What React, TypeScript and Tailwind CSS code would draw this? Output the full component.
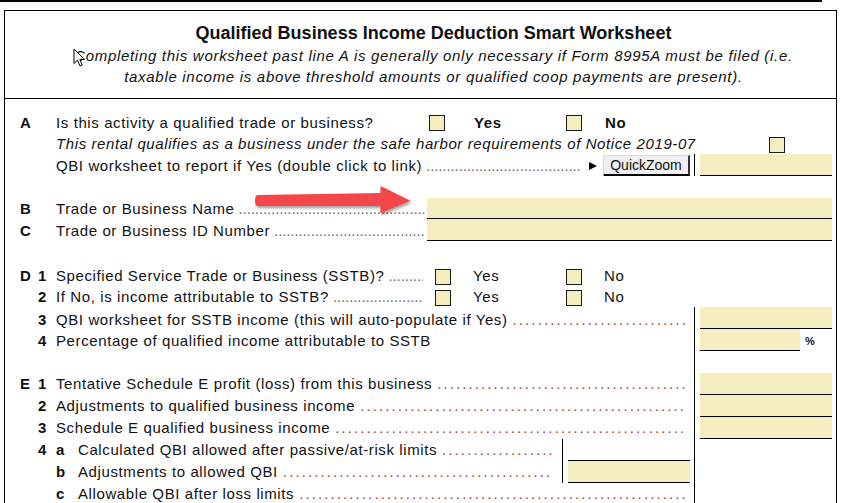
import React from "react";

const DOTS = ".".repeat(220);

function Check() {
  return <span className="block h-[16px] w-[16px] shrink-0 border border-[#1a1a1a] bg-[#f3edc0]" />;
}

function Lead({ red }: { red?: boolean }) {
  return (
    <span
      className={
        red
          ? "ml-[5px] w-0 min-w-0 flex-1 overflow-hidden whitespace-nowrap tracking-[2.1px] text-[#9a3a3a]"
          : "ml-[4px] w-0 min-w-0 flex-1 overflow-hidden whitespace-nowrap tracking-[-0.1px] text-[#6a6a6a]"
      }
    >
      {DOTS}
    </span>
  );
}

function L({ a, n }: { a?: string; n?: string }) {
  return (
    <>
      <span className="w-[18px] shrink-0 font-bold">{a}</span>
      <span className="w-[18px] shrink-0 font-bold">{n}</span>
    </>
  );
}

function Field() {
  return <div className="flex-1 border-b border-black bg-[#f3edc0]" />;
}

type RowProps = {
  h: string;
  line?: boolean;
  right?: React.ReactNode;
  children?: React.ReactNode;
  low?: boolean;
};

function Row({ h, line, right, children, low }: RowProps) {
  return (
    <div className={`flex ${h}`}>
      <div
        className={
          low
            ? "flex w-[689px] shrink-0 items-center overflow-hidden pl-[15px]"
            : "flex w-[689px] shrink-0 items-center overflow-hidden pl-[15px] pt-[2px]"
        }
      >
        {children}
      </div>
      <div className={line ? "w-px shrink-0 bg-black" : "w-px shrink-0"} />
      <div className="w-[5px] shrink-0" />
      <div className="flex w-[132px] shrink-0 flex-col">{right}</div>
      <div className="w-[4px] shrink-0" />
    </div>
  );
}

export default function App() {
  return (
    <div className="relative h-[503px] w-[858px] overflow-hidden bg-white font-['Liberation_Sans',Arial,sans-serif] text-[15px] tracking-[0.6px] text-[#111]">
      <div className="h-[2px] w-[822px] bg-black" />
      <div className="ml-[4px] mt-[8px] w-[833px] border border-b-0 border-black">
        {/* Title */}
        <div className="flex h-[88px] flex-col items-center border-b border-black pl-[26px] pt-[12px]">
          <div className="whitespace-nowrap text-[18px] font-bold leading-[21px] tracking-normal">
            Qualified Business Income Deduction Smart Worksheet
          </div>
          <div className="mt-[1px] whitespace-nowrap text-center text-[15px] italic leading-[21px] tracking-[0.7px]">
            Completing this worksheet past line A is generally only necessary if Form 8995A must be filed (i.e.
            <br />
            taxable income is above threshold amounts or qualified coop payments are present).
          </div>
        </div>

        <div className="h-[12px]" />

        {/* A */}
        <div className="flex h-[22px] items-center pl-[15px] pt-[2px]">
          <div className="flex w-[409px] shrink-0 items-center">
            <span className="w-[36px] shrink-0 font-bold">A</span>
            <span className="whitespace-nowrap">Is this activity a qualified trade or business?</span>
          </div>
          <Check />
          <span className="ml-[29px] w-[92px] shrink-0 font-bold">Yes</span>
          <Check />
          <span className="ml-[23px] font-bold">No</span>
        </div>
        <div className="flex h-[21px] items-center pl-[15px] pt-[2px]">
          <div className="flex w-[749px] shrink-0 items-center">
            <span className="w-[36px] shrink-0" />
            <span className="whitespace-nowrap italic">
              This rental qualifies as a business under the safe harbor requirements of Notice 2019-07
            </span>
          </div>
          <Check />
        </div>
        <Row h="h-[22px]" line right={<Field />}>
          <div className="flex min-w-0 flex-1 items-center pr-[4px]">
            <L />
            <span className="whitespace-nowrap">QBI worksheet to report if Yes (double click to link)</span>
            <Lead />
            <svg className="ml-[7px] shrink-0" width="8" height="8" viewBox="0 0 8 8">
              <polygon points="0,0 8,4 0,8" fill="#000" />
            </svg>
            <div className="ml-[6px] flex h-[22px] w-[87px] shrink-0 items-center justify-center border border-b-[3px] border-r-[2px] border-t-[#dcdcdc] border-l-[#dcdcdc] border-r-[#333] border-b-black bg-[#f0f0f0] text-[14px] tracking-normal">
              QuickZoom
            </div>
          </div>
        </Row>

        <div className="h-[22px]" />

        {/* B / C */}
        <div className="flex h-[21px]">
          <div className="flex w-[422px] shrink-0 items-center overflow-hidden pl-[15px] pr-[2px] pt-[2px]">
            <span className="w-[36px] shrink-0 font-bold">B</span>
            <span className="whitespace-nowrap">Trade or Business Name</span>
            <Lead />
          </div>
          <div className="w-[405px] shrink-0 border-b border-black bg-[#f3edc0]" />
        </div>
        <div className="flex h-[22px]">
          <div className="flex w-[422px] shrink-0 items-center overflow-hidden pl-[15px] pr-[2px] pt-[2px]">
            <span className="w-[36px] shrink-0 font-bold">C</span>
            <span className="whitespace-nowrap">Trade or Business ID Number</span>
            <Lead />
          </div>
          <div className="w-[405px] shrink-0 border-b border-black bg-[#f3edc0]" />
        </div>

        <div className="h-[24px]" />

        {/* D */}
        <Row h="h-[21px]">
          <div className="flex w-[415px] shrink-0 items-center overflow-hidden pr-[12px]">
            <L a="D" n="1" />
            <span className="whitespace-nowrap">Specified Service Trade or Business (SSTB)?</span>
            <Lead />
          </div>
          <Check />
          <span className="ml-[22px] w-[93px] shrink-0">Yes</span>
          <Check />
          <span className="ml-[22px]">No</span>
        </Row>
        <Row h="h-[21px]">
          <div className="flex w-[415px] shrink-0 items-center overflow-hidden pr-[12px]">
            <L n="2" />
            <span className="whitespace-nowrap">If No, is income attributable to SSTB?</span>
            <Lead />
          </div>
          <Check />
          <span className="ml-[22px] w-[93px] shrink-0">Yes</span>
          <Check />
          <span className="ml-[22px]">No</span>
        </Row>
        <Row h="h-[22px]" line right={<Field />}>
          <div className="flex min-w-0 flex-1 items-center pr-[8px] pt-[2px]">
            <L n="3" />
            <span className="whitespace-nowrap">QBI worksheet for SSTB income (this will auto-populate if Yes)</span>
            <Lead red />
          </div>
        </Row>
        <Row
          h="h-[22px]"
          line
          right={
            <div className="flex flex-1">
              <div className="w-[100px] border-b border-black bg-[#f3edc0]" />
              <span className="ml-[5px] mt-[4px] text-[11px] font-bold tracking-normal">%</span>
            </div>
          }
        >
          <div className="flex min-w-0 flex-1 items-center pr-[8px]">
            <L n="4" />
            <span className="whitespace-nowrap">Percentage of qualified income attributable to SSTB</span>
          </div>
        </Row>

        <Row h="h-[22px]" line />

        {/* E */}
        <Row h="h-[22px]" line low right={<Field />}>
          <div className="flex min-w-0 flex-1 items-center pr-[8px]">
            <L a="E" n="1" />
            <span className="whitespace-nowrap">Tentative Schedule E profit (loss) from this business</span>
            <Lead red />
          </div>
        </Row>
        <Row h="h-[22px]" line low right={<Field />}>
          <div className="flex min-w-0 flex-1 items-center pr-[8px]">
            <L n="2" />
            <span className="whitespace-nowrap">Adjustments to qualified business income</span>
            <Lead red />
          </div>
        </Row>
        <Row h="h-[22px]" line low right={<Field />}>
          <div className="flex min-w-0 flex-1 items-center pr-[8px]">
            <L n="3" />
            <span className="whitespace-nowrap">Schedule E qualified business income</span>
            <Lead red />
          </div>
        </Row>
        <Row h="h-[22px]" line low>
          <div className="flex h-full items-center">
            <div className="flex w-[533px] shrink-0 items-center overflow-hidden">
              <L n="4" />
              <span className="w-[22px] shrink-0 font-bold">a</span>
              <span className="whitespace-nowrap">Calculated QBI allowed after passive/at-risk limits</span>
              <Lead red />
            </div>
            <div className="w-[9px] shrink-0" />
            <div className="h-full w-px shrink-0 bg-black" />
            <div className="w-[5px] shrink-0" />
            <div className="flex h-full w-[122px] shrink-0 flex-col">
              <div className="flex-1 border-b border-black" />
            </div>
          </div>
        </Row>
        <Row h="h-[22px]" line low>
          <div className="flex h-full items-center">
            <div className="flex w-[533px] shrink-0 items-center overflow-hidden">
              <L />
              <span className="w-[22px] shrink-0 font-bold">b</span>
              <span className="whitespace-nowrap">Adjustments to allowed QBI</span>
              <Lead red />
            </div>
            <div className="w-[9px] shrink-0" />
            <div className="h-full w-px shrink-0 bg-black" />
            <div className="w-[5px] shrink-0" />
            <div className="flex h-full w-[122px] shrink-0 flex-col">
              <Field />
            </div>
          </div>
        </Row>
        <Row h="h-[22px]" line low>
          <div className="flex min-w-0 flex-1 items-center pr-[8px]">
            <L />
            <span className="w-[22px] shrink-0 font-bold">c</span>
            <span className="whitespace-nowrap">Allowable QBI after loss limits</span>
            <Lead red />
          </div>
        </Row>
      </div>

      {/* red annotation arrow */}
      <svg className="absolute left-[250px] top-[181px]" width="170" height="40" viewBox="0 0 170 40">
        <defs>
          <filter id="sh" x="-10%" y="-30%" width="130%" height="180%">
            <feDropShadow dx="1" dy="2" stdDeviation="1.5" floodColor="#000" floodOpacity="0.4" />
          </filter>
        </defs>
        <g filter="url(#sh)" fill="#f5474a">
          <path d="M8,14 L132,12 L132,25 L8,25 Q5,25 5,19.5 Q5,14 8,14 Z" />
          <polygon points="130.5,5 160.5,19.7 130.5,32.3" />
        </g>
      </svg>

      {/* mouse cursor */}
      <svg className="absolute left-[73px] top-[48px]" width="14" height="20" viewBox="0 0 14 20">
        <path
          d="M1,1 L1,15.5 L4.5,12.2 L7,18 L9.2,17 L6.8,11.4 L11.5,11.4 Z"
          fill="#fff"
          stroke="#000"
          strokeWidth="1"
          strokeLinejoin="miter"
        />
      </svg>
    </div>
  );
}
